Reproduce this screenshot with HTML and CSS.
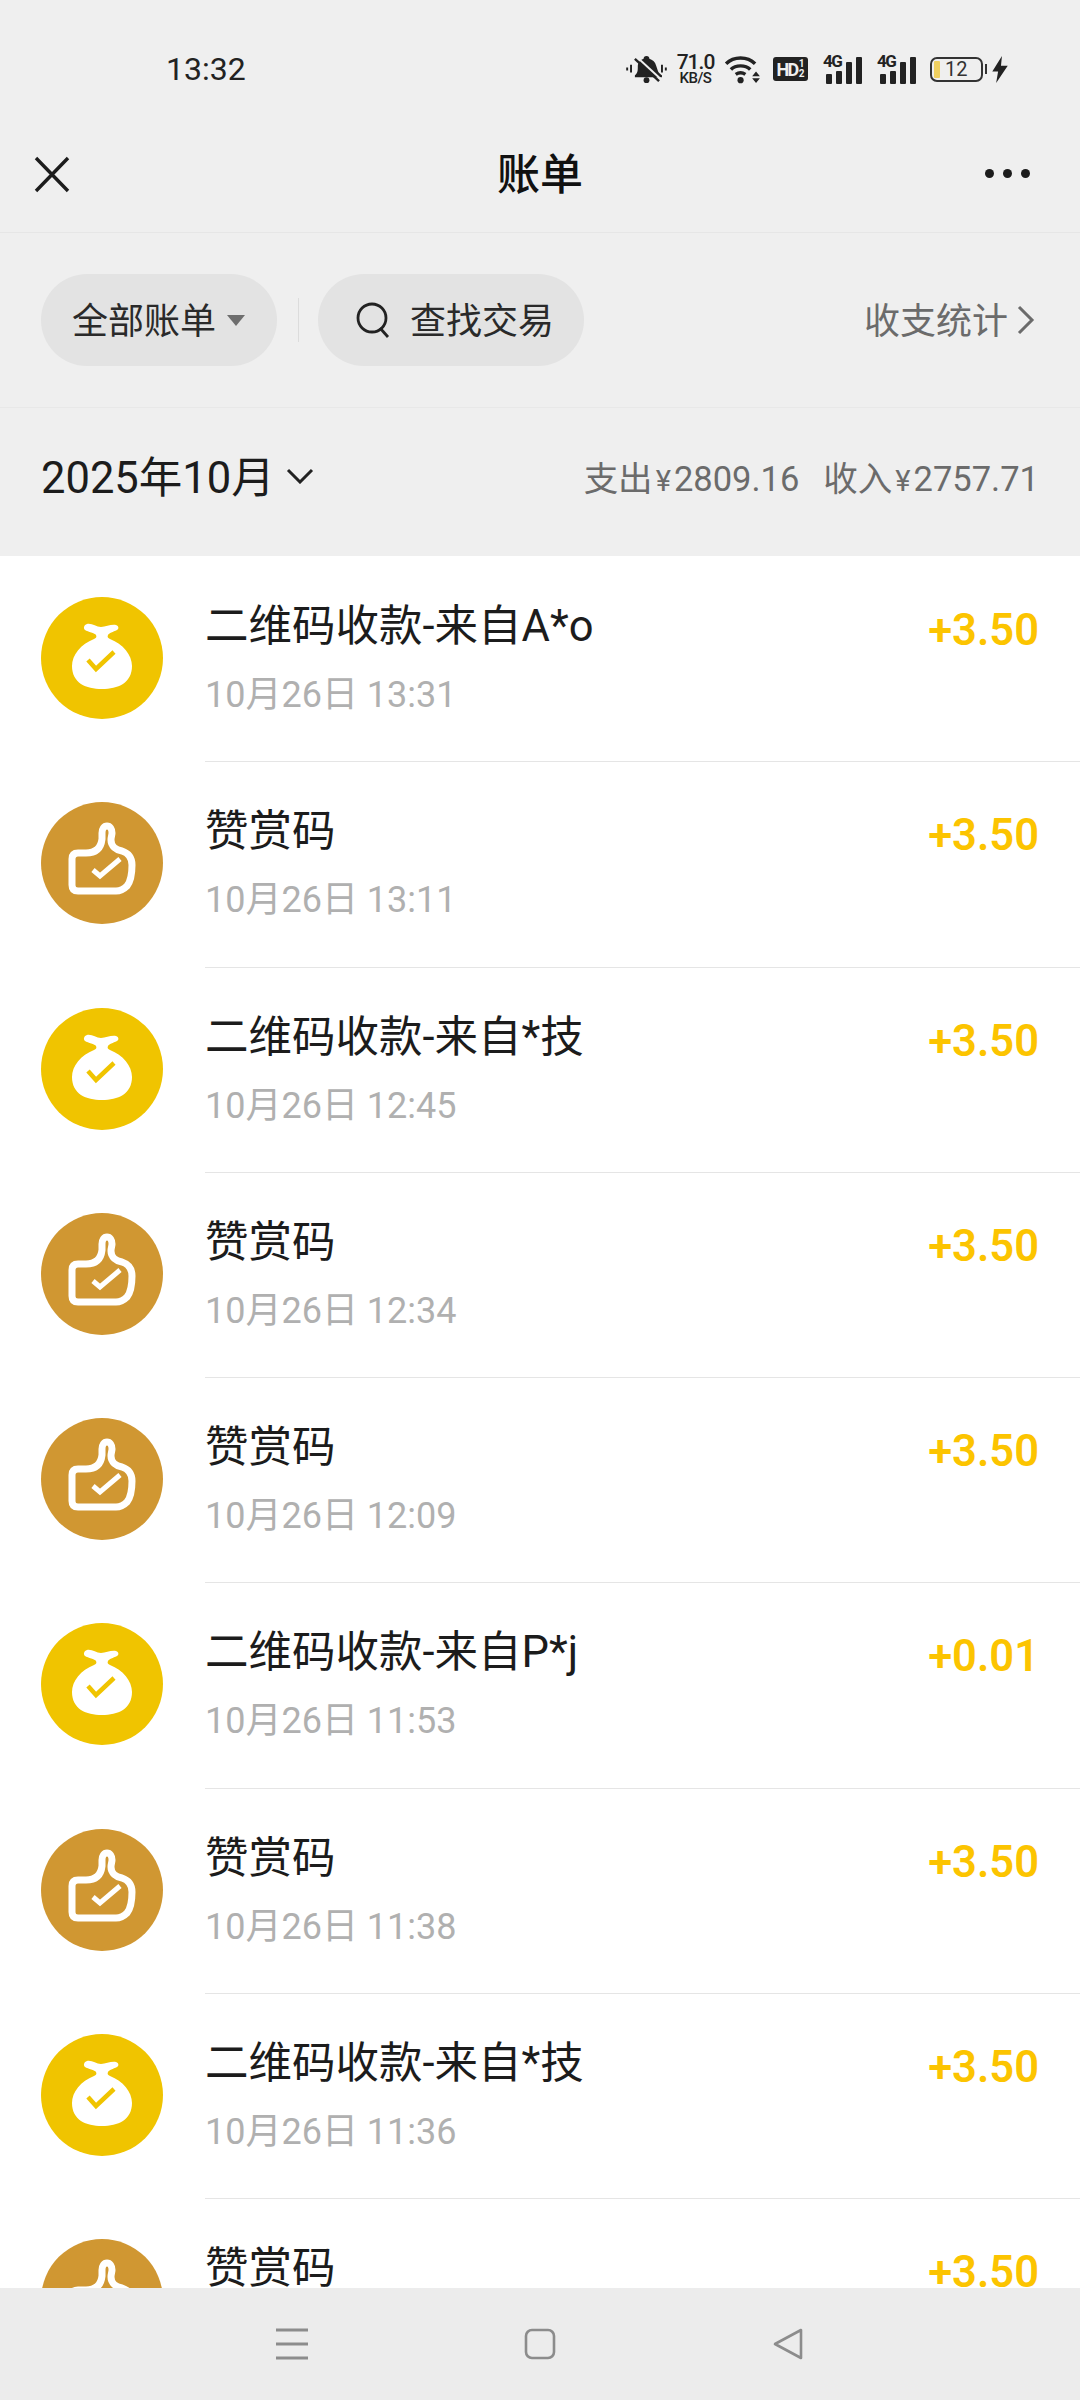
FILE: index.html
```html
<!DOCTYPE html>
<html lang="zh-CN">
<head>
  <meta charset="UTF-8" />
  <meta name="viewport" content="width=device-width, initial-scale=1.0" />
  <title>账单</title>
  <link rel="stylesheet" href="styles.css">
</head>
<body>
  <svg class="defs" width="0" height="0">
    <symbol id="bag" viewBox="0 0 122 122">
      <circle cx="61" cy="61" r="61" fill="#f0c400"/>
      <path fill="#fff" d="M44 33c-2-2-1-5 2-6 5-1 9 3 14 3s10-3 15-2c3 1 3 4 1 5-4 2-8 3-9 5-1 2 0 3 2 4 13 5 22 16 22 27 0 17-14 23-30 23s-30-6-30-23c0-11 9-22 22-27 2-1 3-2 2-4-1-2-8-3-11-5z"/>
      <path fill="none" stroke="#f0c400" stroke-width="4.5" d="M47 63l8 9 18-17"/>
    </symbol>
    <symbol id="thumb" viewBox="0 0 122 122">
      <circle cx="61" cy="61" r="61" fill="#d09732"/>
      <path fill="none" stroke="#fff" stroke-width="7" stroke-linejoin="round" d="M31 57c0-4 2-6 6-6h8c10 0 15-5 16-14v-6c0-4 2-7 5-7s5 3 5 7c0 2-1 4-1 7 0 6 5 10 11 11 6 2 10 6 10 14 0 10-1 16-5 21-3 3-6 5-11 5H37c-4 0-6-2-6-6z"/>
      <path fill="none" stroke="#fff" stroke-width="5" d="M52 68l7 6 20-17"/>
    </symbol>
  </svg>

  <div class="status-bar">
    <span class="clock">13:32</span>
    <div class="status-icons">
      <svg width="41" height="29" viewBox="0 0 42 30"><path fill="#222" d="M9 21c3-2 3-5 3-9 0-4 3-7 6-8 0-2 1-3 3-3s3 1 3 3c3 1 6 3 7 7l2 6c1 2 3 3 4 4v2H9z"/><circle cx="21" cy="26" r="3" fill="#222"/><path stroke="#222" stroke-width="2.5" d="M9 4l25 23"/><path stroke="#efefef" stroke-width="2" d="M11 2l25 23"/><path stroke="#222" stroke-width="2" d="M1 13v3M5 10v8M37 10v8M41 13v3"/></svg>
      <div class="speed"><span>71.0</span><span class="speed-unit">KB/S</span></div>
      <svg width="37" height="29" viewBox="0 0 38 30"><path fill="none" stroke="#222" stroke-width="3.6" d="M2 9c8-8 22-8 30 0M7 15c5-5 15-5 20 0M12 20c3-2 7-2 10 0"/><circle cx="17" cy="26" r="3.2" fill="#222"/><path fill="#222" d="M33 17l4 5h-8zM29 24h8l-4 5z"/></svg>
      <div class="hd">HD<span class="hd-frac">1<br>2</span></div>
      <div class="signal"><span class="net">4G</span><i class="bar b1"></i><i class="bar b2"></i><i class="bar b3"></i><i class="bar b4"></i></div>
      <div class="signal"><span class="net">4G</span><i class="bar b1"></i><i class="bar b2"></i><i class="bar b3"></i><i class="bar b4"></i></div>
      <div class="battery"><div class="battery-body"><i class="battery-level"></i><span>12</span></div><i class="battery-cap"></i></div>
      <svg class="bolt" width="17" height="27" viewBox="0 0 17 28"><path fill="#222" d="M10 0L0 16h6l-2 12 12-18H9z"/></svg>
    </div>
  </div>

  <div class="nav">
    <svg width="38" height="38" viewBox="0 0 38 38"><path stroke="#1c1c1c" stroke-width="3.4" d="M3 3l32 33M35 3L3 36"/></svg>
    <div class="nav-title">账单</div>
    <div class="dots"><i></i><i></i><i></i></div>
  </div>

  <div class="filters">
    <div class="pill pill-all"><span class="pill-text">全部账单</span><i class="caret"></i></div>
    <div class="divider"></div>
    <div class="pill pill-search">
      <svg width="36" height="38" viewBox="0 0 36 38"><circle cx="17" cy="17" r="14" fill="none" stroke="#222" stroke-width="2.8"/><path stroke="#222" stroke-width="2.8" d="M25 27l8 9"/></svg>
      <span class="pill-text">查找交易</span>
    </div>
    <div class="stats"><span class="pill-text">收支统计</span><svg width="18" height="30" viewBox="0 0 18 30"><path fill="none" stroke="#6b6b6b" stroke-width="3" d="M2 2l13 13L2 28"/></svg></div>
  </div>

  <div class="month-bar">
    <div class="month"><span class="month-text">2025年10月</span><svg width="28" height="16" viewBox="0 0 28 16"><path fill="none" stroke="#222" stroke-width="3" d="M2 2l12 12L26 2"/></svg></div>
    <div class="totals"><span>支出<span class="yen">¥</span>2809.16</span><span>收入<span class="yen">¥</span>2757.71</span></div>
  </div>

  <div class="list">
    <div class="row"><svg class="avatar"><use href="#bag"/></svg><div class="row-main"><div class="row-title">二维码收款-来自A*o</div><div class="row-time">10月26日 13:31</div></div><div class="amount">+3.50</div></div>
    <div class="row"><svg class="avatar"><use href="#thumb"/></svg><div class="row-main"><div class="row-title">赞赏码</div><div class="row-time">10月26日 13:11</div></div><div class="amount">+3.50</div></div>
    <div class="row"><svg class="avatar"><use href="#bag"/></svg><div class="row-main"><div class="row-title">二维码收款-来自*技</div><div class="row-time">10月26日 12:45</div></div><div class="amount">+3.50</div></div>
    <div class="row"><svg class="avatar"><use href="#thumb"/></svg><div class="row-main"><div class="row-title">赞赏码</div><div class="row-time">10月26日 12:34</div></div><div class="amount">+3.50</div></div>
    <div class="row"><svg class="avatar"><use href="#thumb"/></svg><div class="row-main"><div class="row-title">赞赏码</div><div class="row-time">10月26日 12:09</div></div><div class="amount">+3.50</div></div>
    <div class="row"><svg class="avatar"><use href="#bag"/></svg><div class="row-main"><div class="row-title">二维码收款-来自P*j</div><div class="row-time">10月26日 11:53</div></div><div class="amount">+0.01</div></div>
    <div class="row"><svg class="avatar"><use href="#thumb"/></svg><div class="row-main"><div class="row-title">赞赏码</div><div class="row-time">10月26日 11:38</div></div><div class="amount">+3.50</div></div>
    <div class="row"><svg class="avatar"><use href="#bag"/></svg><div class="row-main"><div class="row-title">二维码收款-来自*技</div><div class="row-time">10月26日 11:36</div></div><div class="amount">+3.50</div></div>
    <div class="row"><svg class="avatar"><use href="#thumb"/></svg><div class="row-main"><div class="row-title">赞赏码</div></div><div class="amount">+3.50</div></div>
  </div>

  <div class="bottom-nav">
    <svg width="32" height="32" viewBox="0 0 32 32"><path stroke="#8c8c8c" stroke-width="3" d="M0 2h32M0 16h32M0 30h32"/></svg>
    <svg width="32" height="32" viewBox="0 0 32 32"><rect x="2" y="2" width="28" height="28" rx="6" fill="none" stroke="#8c8c8c" stroke-width="2.6"/></svg>
    <svg width="32" height="32" viewBox="0 0 32 32"><path fill="none" stroke="#8c8c8c" stroke-width="2.6" stroke-linejoin="round" d="M29 2v28L3 16z"/></svg>
  </div>
</body>
</html>
```

FILE: styles.css
```css
* {
  box-sizing: border-box;
  margin: 0;
  padding: 0;
}

html, body {
  height: 100%;
}

body {
  display: flex;
  flex-direction: column;
  height: 2400px;
  overflow: hidden;
  background: #fff;
  font-family: Roboto, "Noto Sans CJK SC", sans-serif;
  color: #1c1c1c;
}

.defs {
  position: absolute;
}

.status-bar {
  display: flex;
  align-items: center;
  justify-content: space-between;
  height: 115px;
  padding: 23px 71px 0 166px;
  background: #efefef;
  flex: none;
}

.clock {
  font-size: 32px;
  font-weight: 400;
  color: #222;
}

.status-icons {
  display: flex;
  align-items: center;
  gap: 10px;
}

.speed {
  display: flex;
  flex-direction: column;
  align-items: center;
  width: 37px;
  font-size: 21px;
  font-weight: 500;
  letter-spacing: -1px;
  line-height: 18px;
  color: #222;
}

.speed-unit {
  font-size: 15px;
  letter-spacing: -0.5px;
  line-height: 14px;
}

.hd {
  display: flex;
  align-items: center;
  justify-content: center;
  gap: 1px;
  width: 35px;
  height: 24px;
  margin-left: 2px;
  border-radius: 3px;
  background: #222;
  color: #efefef;
  font-size: 18px;
  font-weight: 700;
  letter-spacing: -1.5px;
}

.hd-frac {
  font-size: 10px;
  line-height: 10px;
  letter-spacing: 0;
  text-align: center;
}

.signal {
  position: relative;
  display: flex;
  align-items: flex-end;
  gap: 4.5px;
  width: 39px;
  height: 29px;
  padding-left: 3px;
  margin-left: 5px;
}

.net {
  position: absolute;
  top: -1px;
  left: 0;
  font-size: 17px;
  font-weight: 700;
  letter-spacing: -1.5px;
  line-height: 15px;
  color: #222;
}

.bar {
  width: 5.5px;
  background: #222;
  border-radius: 1px;
}

.b1 {
  height: 10px;
}

.b2 {
  height: 13px;
}

.b3 {
  height: 22px;
}

.b4 {
  height: 27px;
}

.battery {
  display: flex;
  align-items: center;
  gap: 2px;
  margin-left: 4px;
}

.battery-body {
  display: flex;
  align-items: center;
  gap: 5px;
  width: 53px;
  height: 25px;
  padding: 0 2px;
  border: 2px solid #333;
  border-radius: 7px;
  font-size: 20px;
  color: #333;
}

.battery-level {
  width: 6px;
  height: 17px;
  background: #f0d060;
  border-radius: 1px;
}

.battery-cap {
  width: 2px;
  height: 10px;
  background: #333;
}

.bolt {
  margin-left: -5px;
}

.nav {
  position: relative;
  display: flex;
  align-items: center;
  justify-content: space-between;
  height: 118px;
  padding: 0 50px 0 33px;
  background: #efefef;
  border-bottom: 1px solid #e6e6e6;
  flex: none;
}

.nav-title {
  position: absolute;
  left: 0;
  right: 0;
  padding-bottom: 5px;
  text-align: center;
  font-size: 43px;
  font-weight: 500;
  color: #111;
}

.dots {
  display: flex;
  gap: 9px;
}

.dots i {
  width: 9px;
  height: 9px;
  border-radius: 50%;
  background: #1c1c1c;
}

.filters {
  display: flex;
  align-items: center;
  height: 175px;
  padding: 0 45px 0 41px;
  background: #efefef;
  border-bottom: 1px solid #e8e8e8;
  flex: none;
}

.pill {
  display: flex;
  align-items: center;
  height: 92px;
  border-radius: 46px;
  background: #e3e3e3;
  font-size: 36px;
  color: #2a2a2a;
}

.pill-text {
  padding-bottom: 4px;
}

.pill-all {
  gap: 11px;
  width: 236px;
  padding-left: 31px;
}

.caret {
  width: 0;
  height: 0;
  border-left: 9px solid transparent;
  border-right: 9px solid transparent;
  border-top: 11px solid #6e6e6e;
}

.divider {
  width: 1px;
  height: 44px;
  margin: 0 19px 0 21px;
  background: #dcdcdc;
}

.pill-search {
  gap: 19px;
  width: 266px;
  padding-left: 37px;
}

.stats {
  display: flex;
  align-items: center;
  gap: 9px;
  margin-left: auto;
  font-size: 36px;
  color: #6b6b6b;
}

.month-bar {
  display: flex;
  align-items: center;
  justify-content: space-between;
  height: 148px;
  padding: 0 41px 12px;
  background: #efefef;
  flex: none;
}

.month {
  display: flex;
  align-items: center;
  gap: 11px;
  font-size: 43.5px;
  color: #1c1c1c;
}

.month-text {
  padding-bottom: 4px;
}

.totals {
  display: flex;
  gap: 24px;
  font-size: 34.5px;
  color: #6b6b6b;
}

.yen {
  margin: 0 3px 0 3px;
  font-size: 29px;
}

.list {
  flex: 1;
  min-height: 0;
  overflow: hidden;
  background: #fff;
}

.row {
  display: flex;
  height: 205.25px;
  padding: 0 41px;
}

.avatar {
  width: 122px;
  height: 122px;
  margin-top: 41px;
  flex: none;
}

.row-main {
  flex: 1;
  min-width: 0;
  margin-left: 42px;
  padding-top: 42px;
}

.row-title {
  font-size: 43.5px;
  line-height: 58px;
  color: #1c1c1c;
}

.row-time {
  margin-top: 17px;
  font-size: 36px;
  line-height: 44px;
  color: #b0b0b0;
}

.row + .row {
  position: relative;
}

.row + .row::before {
  content: "";
  position: absolute;
  top: 0;
  left: 205px;
  right: 0;
  height: 1px;
  background: #e5e5e5;
}

.amount {
  padding-top: 50px;
  font-size: 43.5px;
  font-weight: 600;
  line-height: 50px;
  color: #fcc400;
}

.bottom-nav {
  display: flex;
  align-items: center;
  justify-content: center;
  gap: 216px;
  height: 112px;
  background: #ececec;
  flex: none;
}
```
